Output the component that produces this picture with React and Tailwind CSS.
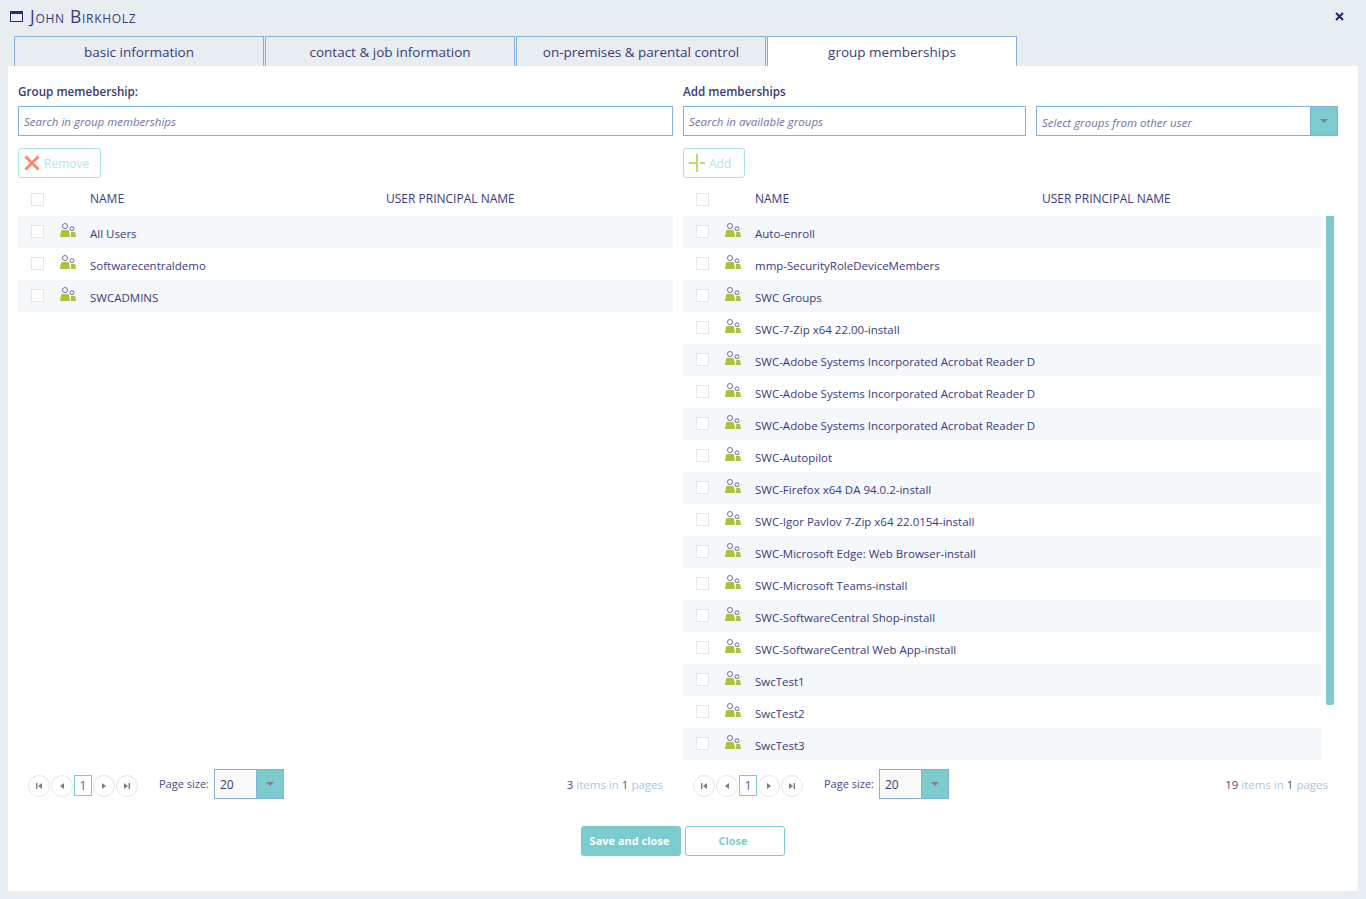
import React from 'react'

const leftGroups = ['All Users', 'Softwarecentraldemo', 'SWCADMINS']

const rightGroups = [
  'Auto-enroll',
  'mmp-SecurityRoleDeviceMembers',
  'SWC Groups',
  'SWC-7-Zip x64 22.00-install',
  'SWC-Adobe Systems Incorporated Acrobat Reader D',
  'SWC-Adobe Systems Incorporated Acrobat Reader D',
  'SWC-Adobe Systems Incorporated Acrobat Reader D',
  'SWC-Autopilot',
  'SWC-Firefox x64 DA 94.0.2-install',
  'SWC-Igor Pavlov 7-Zip x64 22.0154-install',
  'SWC-Microsoft Edge: Web Browser-install',
  'SWC-Microsoft Teams-install',
  'SWC-SoftwareCentral Shop-install',
  'SWC-SoftwareCentral Web App-install',
  'SwcTest1',
  'SwcTest2',
  'SwcTest3',
]

const tabs = ['basic information', 'contact & job information', 'on-premises & parental control', 'group memberships']

function GroupIcon() {
  return (
    <svg width="16" height="14" viewBox="0 0 16 14" className="block">
      <circle cx="5" cy="3" r="2.5" fill="none" stroke="#6d6fa8" strokeWidth="1" />
      <circle cx="12" cy="5.7" r="2" fill="none" stroke="#6d6fa8" strokeWidth="1" />
      <path d="M0 14L1 8Q1.2 7 2.5 7H7.5Q8.8 7 9 8L10 14Z" fill="#b0c03c" />
      <path d="M11 14V9H14.5Q15.2 9 15.4 10L16 14Z" fill="#b0c03c" />
    </svg>
  )
}

function Checkbox() {
  return <span className="block w-[13px] h-[13px] border border-[#e4e6e8] bg-white shrink-0" />
}

function Row({ name, shaded }) {
  return (
    <div className={`flex h-8 pl-[13px] ${shaded ? 'bg-[#f5f8fb]' : ''}`}>
      <div className="pt-[9px] w-[29px]">
        <Checkbox />
      </div>
      <div className="pt-[7px] w-[30px]">
        <GroupIcon />
      </div>
      <span className="leading-[35px] whitespace-nowrap">{name}</span>
    </div>
  )
}

function Header({ nameWidth }) {
  return (
    <div className="flex items-center h-[38px] pt-1 pl-[13px] text-[12px] font-medium">
      <div className="w-[59px]">
        <Checkbox />
      </div>
      <span className={nameWidth}>NAME</span>
      <span>USER PRINCIPAL NAME</span>
    </div>
  )
}

function Caret() {
  return <span className="block w-0 h-0 border-x-[4px] border-x-transparent border-t-[4px] border-t-[#8a7f7f]" />
}

function PagerCircle({ d }) {
  return (
    <span className="flex items-center justify-center w-[22px] h-[22px] rounded-full border border-[#e6e6e6]">
      <svg width="8" height="8" viewBox="0 0 8 8" fill="#7d7d7d">
        <path d={d} />
      </svg>
    </span>
  )
}

function Pager({ items }) {
  return (
    <div className="flex items-center h-[30px] mt-[9px] px-[10px]">
      <div className="flex items-center gap-px pt-[3px]">
        <PagerCircle d="M1 1H2.4V7H1ZM7 1V7L3 4Z" />
        <PagerCircle d="M6 1V7L2 4Z" />
        <span className="flex items-center justify-center w-[18px] h-[21px] border border-[#7ccbce] text-[13px] text-[#6a6aa0]">1</span>
        <PagerCircle d="M2 1V7L6 4Z" />
        <PagerCircle d="M1 1V7L5 4ZM5.6 1H7V7H5.6Z" />
      </div>
      <span className="ml-[21px] mr-[4px] w-[51px] whitespace-nowrap text-[11px] text-[#4c4b8b] pt-[1px]">Page size:</span>
      <div className="flex w-[70px] h-[30px] border border-[#84b1d9] bg-[#fafafa]">
        <span className="flex-1 pl-[5px] leading-[30px] text-[12px]">20</span>
        <span className="flex items-center justify-center w-[27px] bg-[#7ccbce] border-l border-[#84b1d9]">
          <Caret />
        </span>
      </div>
      <span className="ml-auto pt-[2px] text-[11.5px] text-[#a9c6e2]">
        <span className="text-[#4c4b8b]">{items}</span> items in <span className="text-[#4c4b8b]">1</span> pages
      </span>
    </div>
  )
}

function ActionButton({ children, label, width }) {
  return (
    <button className={`flex items-center h-[30px] ${width} mt-3 pl-[5px] border border-[#a9e3e4] rounded-[3px] text-[12px] text-[#b4e4e6]`}>
      {children}
      <span className="ml-[4px] pt-[2px] font-medium">{label}</span>
    </button>
  )
}

export default function App() {
  return (
    <div
      className="h-[899px] w-full bg-[#e8edf2] text-[#3a3a7c] overflow-hidden text-[11.5px]"
      style={{ fontFamily: '"Open Sans", "Noto Sans", sans-serif' }}
    >
      {/* Title bar */}
      <div className="flex items-center h-9 pl-[10px] pr-[22px] pb-[3px]">
        <svg width="13" height="11" viewBox="0 0 13 11" className="mr-[7px]">
          <rect x="0.5" y="0.5" width="12" height="10" fill="none" stroke="#2b2a70" strokeWidth="1" />
          <rect x="0.5" y="0.5" width="12" height="2.5" fill="#2b2a70" />
        </svg>
        <span className="text-[17.5px] font-medium tracking-[0.7px] [font-variant:small-caps]">John Birkholz</span>
        <svg width="9" height="9" viewBox="0 0 9 9" className="ml-auto">
          <path d="M1 1L8 8M8 1L1 8" stroke="#23236b" strokeWidth="2" />
        </svg>
      </div>

      {/* Tabs */}
      <div className="flex gap-px h-[30px] pl-[14px]">
        {tabs.map((t, i) => (
          <div
            key={t}
            className={`flex items-center justify-center w-[250px] pt-px border border-b-0 border-[#84b1d9] text-[13.5px] font-medium ${i === 3 ? 'bg-white' : ''}`}
          >
            {t}
          </div>
        ))}
      </div>

      {/* Panel */}
      <div className="mx-2 h-[825px] bg-white pl-[10px] pr-5 pt-[17px]">
        <div className="grid grid-cols-2 gap-[10px]">
          <div>
            <div className="h-[17px] leading-[17px] text-[11.7px] font-semibold">Group memebership:</div>
            <div className="flex items-center mt-[6px] h-[30px] pt-px px-[5px] border border-[#84b1d9] italic text-[#7473a4]">
              Search in group memberships
            </div>
            <ActionButton label="Remove" width="w-[83px]">
              <svg width="16" height="16" viewBox="0 0 16 16">
                <path d="M1.5 1.5L14.5 14.5M14.5 1.5L1.5 14.5" stroke="#f58a6c" strokeWidth="3" />
              </svg>
            </ActionButton>
            <Header nameWidth="w-[296px]" />
            <div className="h-[544px]">
              {leftGroups.map((g, i) => (
                <Row key={g} name={g} shaded={i % 2 === 0} />
              ))}
            </div>
            <Pager items="3" />
          </div>

          <div>
            <div className="h-[17px] leading-[17px] text-[11.7px] font-semibold">Add memberships</div>
            <div className="flex gap-[10px] mt-[6px]">
              <div className="flex items-center w-[343px] h-[30px] pt-px px-[5px] border border-[#84b1d9] italic text-[#7473a4]">
                Search in available groups
              </div>
              <div className="flex flex-1 h-[30px] border border-[#84b1d9]">
                <span className="flex-1 pl-[5px] pt-px leading-[30px] italic text-[#7473a4]">Select groups from other user</span>
                <span className="flex items-center justify-center w-[27px] bg-[#7ccbce] border-l border-[#84b1d9]">
                  <Caret />
                </span>
              </div>
            </div>
            <ActionButton label="Add" width="w-[62px]">
              <svg width="16" height="18" viewBox="0 0 16 18">
                <path d="M0 9H9M8 0V18M11 9H16" stroke="#c6d66e" strokeWidth="2" />
              </svg>
            </ActionButton>
            <Header nameWidth="w-[287px]" />
            <div className="flex h-[544px]">
              <div className="w-[639px]">
                {rightGroups.map((g, i) => (
                  <Row key={g + i} name={g} shaded={i % 2 === 0} />
                ))}
              </div>
              <div className="ml-1 w-2 h-[489px] bg-[#7ccbce] rounded-b-[2px]" />
            </div>
            <Pager items="19" />
          </div>
        </div>

        <div className="flex justify-center gap-1 mt-[27px] pl-[10px]">
          <button className="w-[100px] h-[30px] pt-px pr-[3px] rounded-[3px] bg-[#7ccbce] text-white text-[11px] font-bold">Save and close</button>
          <button className="w-[100px] h-[30px] pt-px pr-[4px] rounded-[3px] border border-[#7ccbce] bg-white text-[#7ccbce] text-[11px] font-bold">Close</button>
        </div>
      </div>
    </div>
  )
}
